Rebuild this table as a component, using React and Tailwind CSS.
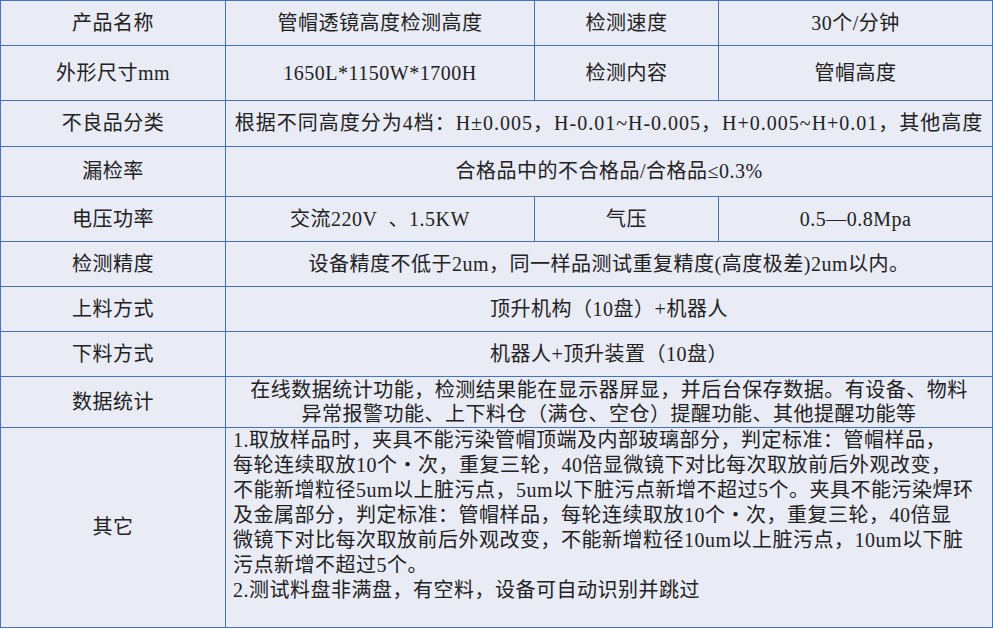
import React from 'react';

const font = { fontFamily: '"Liberation Serif", "Noto Sans CJK SC", serif' };

const Cell = ({ children, span = '', className = '' }) => (
    <div className={`bg-[#e9ebf5] flex items-center justify-center text-center ${span} ${className}`}>
        {children}
    </div>
);

const otherLines = [
    '1.取放样品时，夹具不能污染管帽顶端及内部玻璃部分，判定标准：管帽样品，',
    '每轮连续取放10个・次，重复三轮，40倍显微镜下对比每次取放前后外观改变，',
    '不能新增粒径5um以上脏污点，5um以下脏污点新增不超过5个。夹具不能污染焊环',
    '及金属部分，判定标准：管帽样品，每轮连续取放10个・次，重复三轮，40倍显',
    '微镜下对比每次取放前后外观改变，不能新增粒径10um以上脏污点，10um以下脏',
    '污点新增不超过5个。',
    '2.测试料盘非满盘，有空料，设备可自动识别并跳过',
];

export default function App() {
    return (
        <div className="w-[993px] h-[629px] bg-white" style={font}>
            <div className="grid grid-cols-[224px_308px_183px_273px] grid-rows-[44px_54px_45px_49px_44px_44px_44px_44px_50px_199px] gap-px bg-[#4472c4] p-px text-[20px] tracking-[0.5px] text-[#222] leading-[25px]">
                <Cell>产品名称</Cell>
                <Cell>管帽透镜高度检测高度</Cell>
                <Cell>检测速度</Cell>
                <Cell>30个/分钟</Cell>

                <Cell>外形尺寸mm</Cell>
                <Cell>1650L*1150W*1700H</Cell>
                <Cell>检测内容</Cell>
                <Cell>管帽高度</Cell>

                <Cell>不良品分类</Cell>
                <Cell span="col-span-3" className="whitespace-nowrap tracking-[1px]">
                    根据不同高度分为4档：H±0.005，H-0.01~H-0.005，H+0.005~H+0.01，其他高度
                </Cell>

                <Cell>漏检率</Cell>
                <Cell span="col-span-3">合格品中的不合格品/合格品≤0.3%</Cell>

                <Cell>电压功率</Cell>
                <Cell>交流220V&nbsp;&nbsp;、1.5KW</Cell>
                <Cell>气压</Cell>
                <Cell>0.5—0.8Mpa</Cell>

                <Cell>检测精度</Cell>
                <Cell span="col-span-3">设备精度不低于2um，同一样品测试重复精度(高度极差)2um以内。</Cell>

                <Cell>上料方式</Cell>
                <Cell span="col-span-3">顶升机构（10盘）+机器人</Cell>

                <Cell>下料方式</Cell>
                <Cell span="col-span-3">机器人+顶升装置（10盘）</Cell>

                <Cell>数据统计</Cell>
                <Cell span="col-span-3" className="flex-col leading-[24px]">
                    <div className="whitespace-nowrap">在线数据统计功能，检测结果能在显示器屏显，并后台保存数据。有设备、物料</div>
                    <div className="whitespace-nowrap">异常报警功能、上下料仓（满仓、空仓）提醒功能、其他提醒功能等</div>
                </Cell>

                <Cell>其它</Cell>
                <div className="col-span-3 bg-[#e9ebf5] pl-[7px] text-left">
                    {otherLines.map((l, i) => (
                        <div key={i} className="whitespace-nowrap">{l}</div>
                    ))}
                </div>
            </div>
        </div>
    );
}
